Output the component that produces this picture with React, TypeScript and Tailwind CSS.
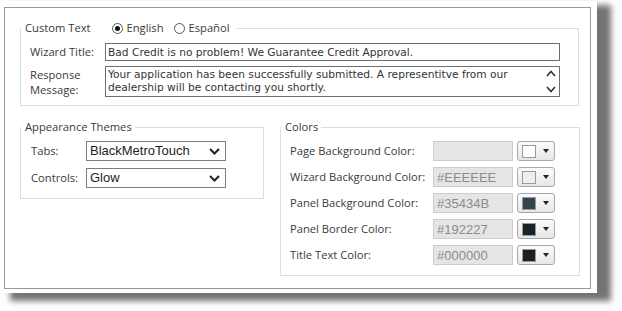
const label = "font-['Open_Sans',sans-serif] text-[11.2px] text-[#3a3a3a]";
const verdana = "font-['DejaVu_Sans',Verdana,sans-serif] text-[10.65px] text-[#333]";
const arial = "font-['Liberation_Sans',Arial,sans-serif] text-[13px]";

function Radio({ checked, text }: { checked?: boolean; text: string }) {
  return (
    <span className="flex items-center gap-[4px]">
      <span className="flex h-[11px] w-[11px] items-center justify-center rounded-full border border-[#555] bg-white">
        {checked && <span className="h-[5px] w-[5px] rounded-full bg-[#111]" />}
      </span>
      <span>{text}</span>
    </span>
  );
}

function Chevron() {
  return (
    <svg width="11" height="7" viewBox="0 0 11 7" className="shrink-0">
      <path d="M1 1 L5.5 5.5 L10 1" fill="none" stroke="#222" strokeWidth="2" />
    </svg>
  );
}

function Select({ value }: { value: string }) {
  return (
    <div className={`flex h-[20px] w-[140px] items-center justify-between border border-[#7d7d7d] bg-white pl-[3px] pr-[5px] ${arial} text-[#1e1e1e]`}>
      <span>{value}</span>
      <Chevron />
    </div>
  );
}

const colors = [
  { name: "Page Background Color:", value: "", swatch: "#ffffff" },
  { name: "Wizard Background Color:", value: "#EEEEEE", swatch: "#eeeeee" },
  { name: "Panel Background Color:", value: "#35434B", swatch: "#35434B" },
  { name: "Panel Border Color:", value: "#192227", swatch: "#192227" },
  { name: "Title Text Color:", value: "#000000", swatch: "#1e1e1e" },
];

export default function App() {
  return (
    <div className="min-h-screen bg-white pl-[4px] pt-[7px]">
      <div className="h-[282px] w-[587px] border border-[#999] bg-white pl-[15px] pr-[10px] pt-[12px] shadow-[1px_-1px_0_5px_#fff,13px_5px_6px_7px_rgba(0,0,0,0.55)]">
        {/* Custom text */}
        <fieldset className="w-[559px] border border-[#dedede]">
          <legend className={`flex h-[16px] items-center pl-[4px] pr-[6px] ${label}`}>
            <span className="mr-[21px]">Custom Text</span>
            <Radio checked text="English" />
            <span className="w-[10px]" />
            <Radio text="Español" />
          </legend>
          <div className="flex flex-col gap-[5px] pb-[8px] pl-[9px] pt-[7px]">
            <div className="flex items-center">
              <span className={`w-[75px] ${label}`}>Wizard Title:</span>
              <input
                readOnly
                value="Bad Credit is no problem! We Guarantee Credit Approval."
                className={`h-[18px] w-[455px] border border-[#6e6e6e] bg-white px-[2px] outline-none ${verdana}`}
              />
            </div>
            <div className="flex items-center">
              <span className={`w-[75px] leading-[15px] ${label}`}>
                Response
                <br />
                Message:
              </span>
              <div className="flex h-[31px] w-[455px] border border-[#6e6e6e] bg-white">
                <div className={`flex-1 px-[2px] pt-[1px] leading-[13px] ${verdana}`}>
                  Your application has been successfully submitted. A representitve from our
                  <br />
                  dealership will be contacting you shortly.
                </div>
                <div className="flex w-[16px] flex-col items-center justify-between py-[3px]">
                  <svg width="10" height="7" viewBox="0 0 10 7">
                    <path d="M1 6 L5 1.5 L9 6" fill="none" stroke="#333" strokeWidth="1.6" />
                  </svg>
                  <svg width="10" height="7" viewBox="0 0 10 7">
                    <path d="M1 1 L5 5.5 L9 1" fill="none" stroke="#333" strokeWidth="1.6" />
                  </svg>
                </div>
              </div>
            </div>
          </div>
        </fieldset>

        <div className="mt-[13px] flex items-start gap-[16px]">
          {/* Appearance themes */}
          <fieldset className="w-[244px] shrink-0 border border-[#dedede]">
            <legend className={`h-[16px] pl-[4px] pr-[3px] leading-[16px] ${label}`}>Appearance Themes</legend>
            <div className="flex flex-col gap-[7px] pb-[10px] pl-[10px] pt-[6px]">
              <div className="flex items-center">
                <span className={`w-[55px] ${label}`}>Tabs:</span>
                <Select value="BlackMetroTouch" />
              </div>
              <div className="flex items-center">
                <span className={`w-[55px] ${label}`}>Controls:</span>
                <Select value="Glow" />
              </div>
            </div>
          </fieldset>

          {/* Colors */}
          <fieldset className="w-[300px] shrink-0 border border-[#dedede]">
            <legend className={`h-[16px] pl-[4px] pr-[3px] leading-[16px] ${label}`}>Colors</legend>
            <div className="flex flex-col gap-[6px] pb-[10px] pl-[9px] pt-[6px]">
              {colors.map((c) => (
                <div key={c.name} className="flex items-center">
                  <span className={`w-[143px] ${label}`}>{c.name}</span>
                  <input
                    readOnly
                    value={c.value}
                    className={`h-[20px] w-[80px] border border-[#cdcdcd] bg-[#e5e5e5] px-[3px] text-[#8c8c8c] outline-none ${arial}`}
                  />
                  <div className="ml-[4px] flex h-[20px] w-[38px] items-center gap-[7px] rounded-[3px] border border-[#a8a8a8] bg-gradient-to-b from-[#fbfbfb] to-[#e7e7e7] pl-[4px]">
                    <span
                      className="h-[13px] w-[14px] border border-[#9a9a9a]"
                      style={{ backgroundColor: c.swatch }}
                    />
                    <span className="h-0 w-0 border-x-[3.5px] border-t-[4px] border-x-transparent border-t-[#222]" />
                  </div>
                </div>
              ))}
            </div>
          </fieldset>
        </div>
      </div>
    </div>
  );
}
